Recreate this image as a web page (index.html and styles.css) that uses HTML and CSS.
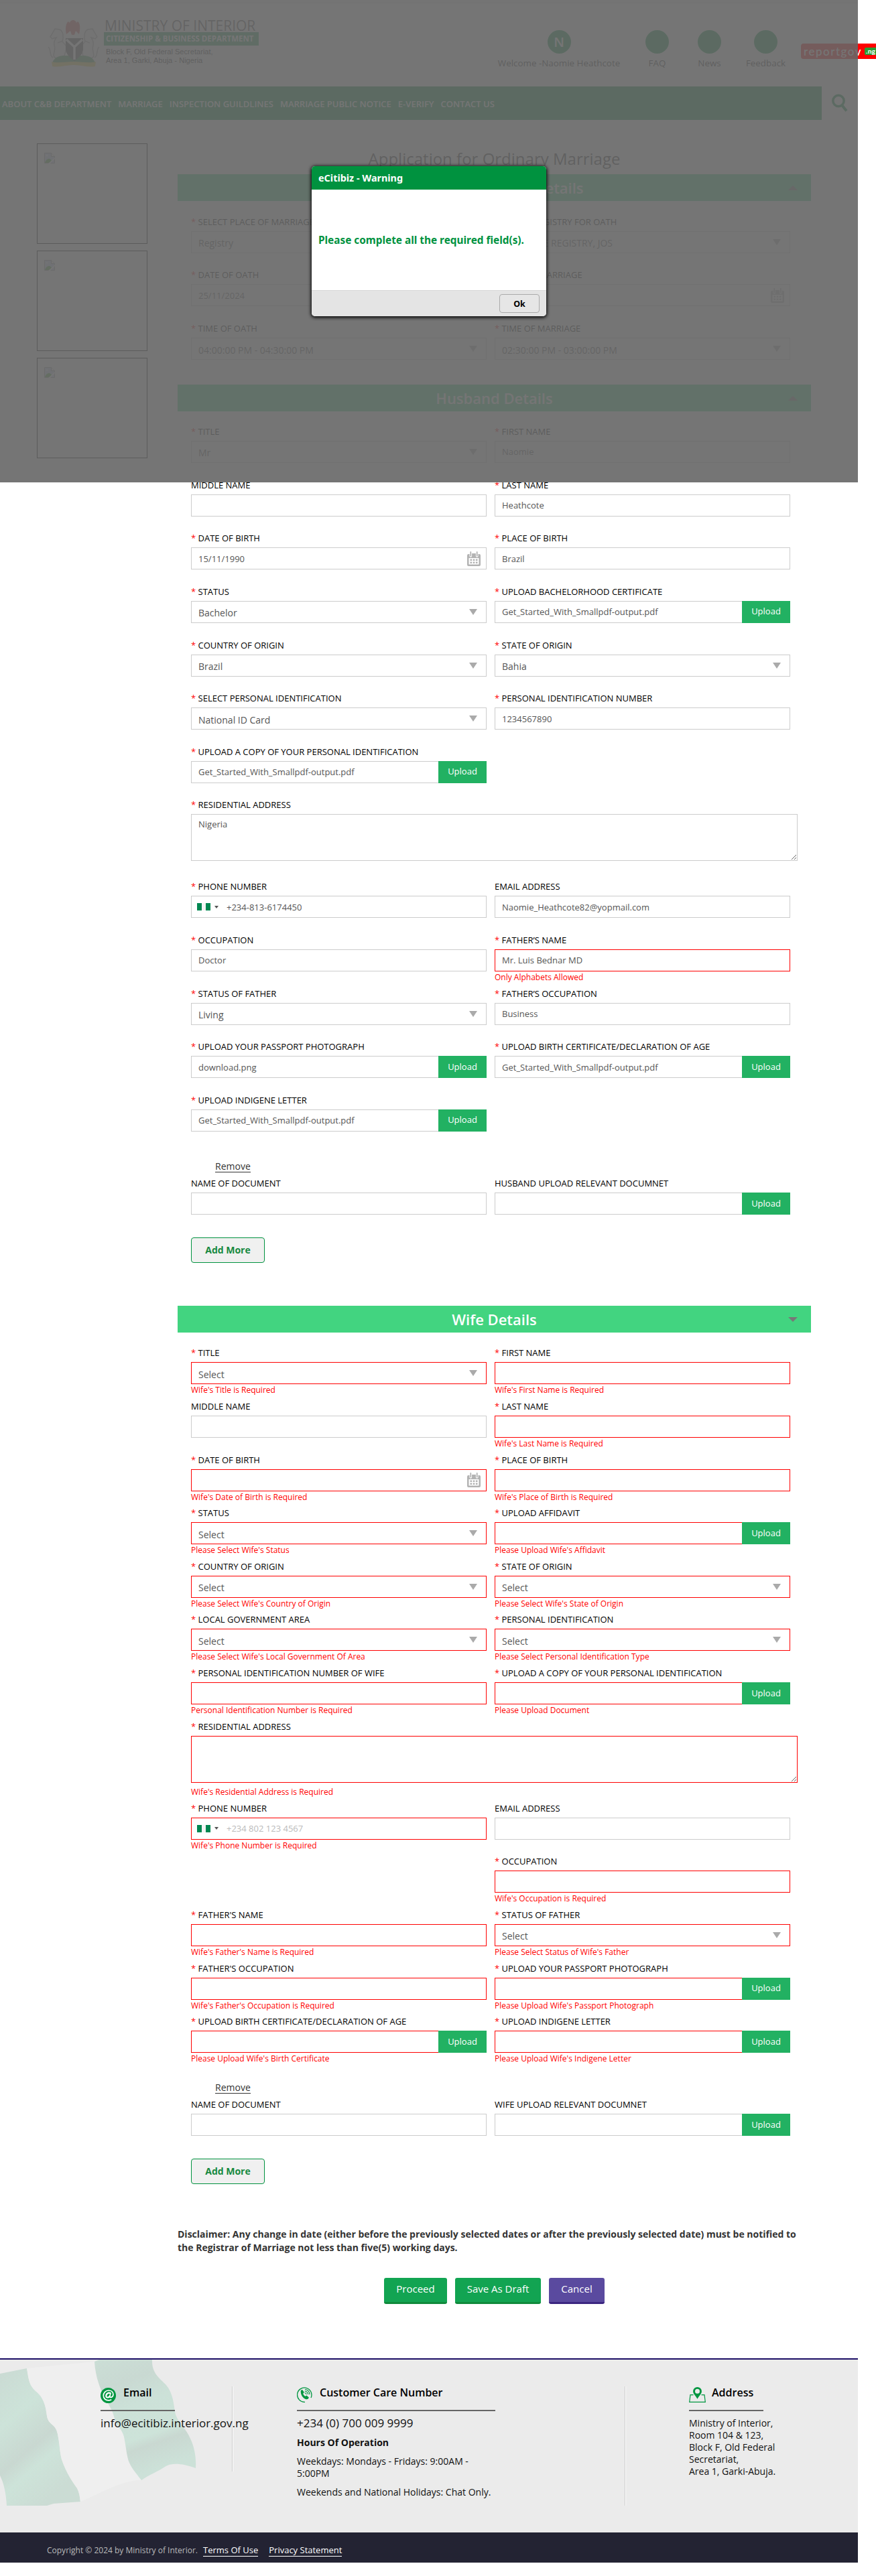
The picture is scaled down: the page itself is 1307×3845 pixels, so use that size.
FILE: index.html
```html
<!DOCTYPE html>
<html lang="en">
<head>
<meta charset="utf-8">
<title>Application for Ordinary Marriage</title>
<link rel="stylesheet" href="styles.css">
</head>
<body>
<svg width="0" height="0" class="defs" aria-hidden="true">
  <symbol id="cal" viewBox="0 0 20 22"><path fill="#b3b3b3" fill-rule="evenodd" d="M2 4h1.500v3a1.800 1.800 0 0 0 3.600 0V3h5.800v4a1.800 1.800 0 0 0 3.600 0V4H18a2 2 0 0 1 2 2v14a2 2 0 0 1-2 2H2a2 2 0 0 1-2-2V6a2 2 0 0 1 2-2zM2.500 10v9.500h15V10z"/><path stroke="#b3b3b3" stroke-width="1.800" stroke-linecap="round" d="M5.300 1v5.500M14.700 1v5.500"/><path fill="#b3b3b3" d="M4.500 11.500h2.600v2.600H4.500zM8.700 11.500h2.600v2.600H8.700zM12.900 11.500h2.600v2.600h-2.600zM4.500 15.500h2.600v2.600H4.500zM8.700 15.500h2.600v2.600H8.700zM12.900 15.500h2.600v2.600h-2.600z"/></symbol>
  <symbol id="broken" viewBox="0 0 16 16"><path fill="#c6d6f5" stroke="#999" d="M.5.500h10l5 5v10H.5z"/><path fill="#4fae3c" d="M1 15c1-4 4-6 6-6 2 0 4 2 4 3l-3 3z"/><path fill="#fff" d="M2 5c1-2 3-2 4 0zM16 7v2L9 16H6z"/><path fill="#fff" stroke="#999" d="M10.500.500v5h5"/></symbol>
</svg>
<div class="page">
  <header class="header">
    <div class="brand">
      <svg class="crest" viewBox="0 0 80 70">
        <path fill="#c8323a" d="M29 21c-2-8-1-16 3-19l2 2c1-3 3-4 5-4s4 1 5 4l2-2c4 3 4 11 2 19l-5-5-2 6h-4l-2-6z"/>
        <g fill="none" stroke="#999" stroke-width="1.500"><path fill="#f4f4f4" d="M24 60c-6-2-14-2-14-8 1-6 3-10 1-14-1-4 1-9 3-12l-6 2-3-3 7-12 7 1c6 3 6 12 4 18l7 8z"/><path fill="#f4f4f4" d="M56 60c6-2 14-2 14-8-1-6-3-10-1-14 1-4-1-9-3-12l6 2 3-3-7-12-7 1c-6 3-6 12-4 18l-7 8z"/><path d="M9 56c-6-3-2-12-7-16M71 56c6-3 2-12 7-16M24 31l-8 3M56 31l8 3"/></g>
        <path fill="#1b8a3a" d="M8 64c4-12 16-12 32-10 16-2 28-2 32 10z"/>
        <path fill="#333" d="M28 27h26v16c0 8-7 13-13 18-6-5-13-10-13-18z"/>
        <path fill="none" stroke="#fff" stroke-width="3.500" d="M29 29l12 11 12-11M41 39v20"/>
        <path fill="#dfc52a" d="M7 62c10 3 20 0 33 0s23 3 33 0l-1 7c-10 2-21-2-32-2s-22 4-32 2z"/>
      </svg>
      <div class="brand-text">
        <div class="brand-name">MINISTRY OF INTERIOR</div>
        <div class="brand-dept">CITIZENSHIP &amp; BUSINESS DEPARTMENT</div>
        <div class="brand-addr">Block F, Old Federal Secretariat,<br>Area 1, Garki, Abuja - Nigeria</div>
      </div>
    </div>
    <div class="quick">
      <div class="quick-item q-user"><span class="dot">N</span><span>Welcome -Naomie Heathcote</span></div>
      <div class="quick-item q-faq"><span class="dot"></span><span>FAQ</span></div>
      <div class="quick-item q-news"><span class="dot"></span><span>News</span></div>
      <div class="quick-item q-feed"><span class="dot"></span><span>Feedback</span></div>
    </div>
    <div class="report"><span>reportgov</span><b>.ng</b></div>
  </header>
  <div class="navrow">
    <nav class="nav"><a>ABOUT C&amp;B DEPARTMENT</a><a>MARRIAGE</a><a>INSPECTION GUILDLINES</a><a>MARRIAGE PUBLIC NOTICE</a><a>E-VERIFY</a><a>CONTACT US</a></nav>
    <svg class="search" viewBox="0 0 24 27"><g fill="none" stroke="#00923f"><circle cx="10" cy="10.500" r="8.200" stroke-width="3.500"/><path stroke-width="4" d="M15.500 17.500l6.500 8"/></g></svg>
  </div>

  <div class="main">
    <aside class="thumbs">
      <div class="thumb"><svg><use href="#broken"/></svg></div>
      <div class="thumb"><svg><use href="#broken"/></svg></div>
      <div class="thumb"><svg><use href="#broken"/></svg></div>
    </aside>
    <div class="form">
      <h1>Application for Ordinary Marriage</h1>

      <div class="bar"><h2>Marriage Registry Details</h2><i class="up"></i></div>
      <div class="fields marriage">
        <div class="row">
          <div class="f"><label><s>*</s> SELECT PLACE OF MARRIAGE</label><div class="box"><select><option>Registry</option></select><i class="tri"></i></div></div>
          <div class="f"><label><s>*</s> SELECT REGISTRY FOR OATH</label><div class="box"><select><option>MARRIAGE REGISTRY, JOS</option></select><i class="tri"></i></div></div>
        </div>
        <div class="row">
          <div class="f"><label><s>*</s> DATE OF OATH</label><div class="box"><input value="25/11/2024"><svg class="cal"><use href="#cal"/></svg></div></div>
          <div class="f"><label><s>*</s> DATE OF MARRIAGE</label><div class="box"><input><svg class="cal"><use href="#cal"/></svg></div></div>
        </div>
        <div class="row">
          <div class="f"><label><s>*</s> TIME OF OATH</label><div class="box"><select><option>04:00:00 PM - 04:30:00 PM</option></select><i class="tri"></i></div></div>
          <div class="f"><label><s>*</s> TIME OF MARRIAGE</label><div class="box"><select><option>02:30:00 PM - 03:00:00 PM</option></select><i class="tri"></i></div></div>
        </div>
      </div>

      <div class="bar"><h2>Husband Details</h2><i class="up"></i></div>
      <div class="fields husband">
        <div class="row">
          <div class="f"><label><s>*</s> TITLE</label><div class="box"><select><option>Mr</option></select><i class="tri"></i></div></div>
          <div class="f"><label><s>*</s> FIRST NAME</label><div class="box"><input value="Naomie"></div></div>
        </div>
        <div class="row">
          <div class="f"><label>MIDDLE NAME</label><div class="box"><input></div></div>
          <div class="f"><label><s>*</s> LAST NAME</label><div class="box"><input value="Heathcote"></div></div>
        </div>
        <div class="row">
          <div class="f"><label><s>*</s> DATE OF BIRTH</label><div class="box"><input value="15/11/1990"><svg class="cal"><use href="#cal"/></svg></div></div>
          <div class="f"><label><s>*</s> PLACE OF BIRTH</label><div class="box"><input value="Brazil"></div></div>
        </div>
        <div class="row">
          <div class="f"><label><s>*</s> STATUS</label><div class="box"><select><option>Bachelor</option></select><i class="tri"></i></div></div>
          <div class="f"><label><s>*</s> UPLOAD BACHELORHOOD CERTIFICATE</label><div class="box file"><input value="Get_Started_With_Smallpdf-output.pdf"><button>Upload</button></div></div>
        </div>
        <div class="row">
          <div class="f"><label><s>*</s> COUNTRY OF ORIGIN</label><div class="box"><select><option>Brazil</option></select><i class="tri"></i></div></div>
          <div class="f"><label><s>*</s> STATE OF ORIGIN</label><div class="box"><select><option>Bahia</option></select><i class="tri"></i></div></div>
        </div>
        <div class="row">
          <div class="f"><label><s>*</s> SELECT PERSONAL IDENTIFICATION</label><div class="box"><select><option>National ID Card</option></select><i class="tri"></i></div></div>
          <div class="f"><label><s>*</s> PERSONAL IDENTIFICATION NUMBER</label><div class="box"><input value="1234567890"></div></div>
        </div>
        <div class="row">
          <div class="f"><label><s>*</s> UPLOAD A COPY OF YOUR PERSONAL IDENTIFICATION</label><div class="box file"><input value="Get_Started_With_Smallpdf-output.pdf"><button>Upload</button></div></div>
        </div>
        <div class="row wide">
          <div class="f"><label><s>*</s> RESIDENTIAL ADDRESS</label><textarea>Nigeria</textarea></div>
        </div>
        <div class="row">
          <div class="f"><label><s>*</s> PHONE NUMBER</label><div class="box"><span class="flag"></span><i class="caret"></i><input class="tel" value="+234-813-6174450"></div></div>
          <div class="f"><label>EMAIL ADDRESS</label><div class="box"><input value="Naomie_Heathcote82@yopmail.com"></div></div>
        </div>
        <div class="row">
          <div class="f"><label><s>*</s> OCCUPATION</label><div class="box"><input value="Doctor"></div></div>
          <div class="f bad"><label><s>*</s> FATHER’S NAME</label><div class="box"><input value="Mr. Luis Bednar MD"></div><p>Only Alphabets Allowed</p></div>
        </div>
        <div class="row">
          <div class="f"><label><s>*</s> STATUS OF FATHER</label><div class="box"><select><option>Living</option></select><i class="tri"></i></div></div>
          <div class="f"><label><s>*</s> FATHER’S OCCUPATION</label><div class="box"><input value="Business"></div></div>
        </div>
        <div class="row">
          <div class="f"><label><s>*</s> UPLOAD YOUR PASSPORT PHOTOGRAPH</label><div class="box file"><input value="download.png"><button>Upload</button></div></div>
          <div class="f"><label><s>*</s> UPLOAD BIRTH CERTIFICATE/DECLARATION OF AGE</label><div class="box file"><input value="Get_Started_With_Smallpdf-output.pdf"><button>Upload</button></div></div>
        </div>
        <div class="row">
          <div class="f"><label><s>*</s> UPLOAD INDIGENE LETTER</label><div class="box file"><input value="Get_Started_With_Smallpdf-output.pdf"><button>Upload</button></div></div>
        </div>
        <div class="remove"><a>Remove</a></div>
        <div class="row">
          <div class="f"><label>NAME OF DOCUMENT</label><div class="box"><input></div></div>
          <div class="f"><label>HUSBAND UPLOAD RELEVANT DOCUMNET</label><div class="box file"><input><button>Upload</button></div></div>
        </div>
        <button class="add">Add More</button>
      </div>

      <div class="bar"><h2>Wife Details</h2><i class="down"></i></div>
      <div class="fields wife">
        <div class="row">
          <div class="f bad"><label><s>*</s> TITLE</label><div class="box"><select><option>Select</option></select><i class="tri"></i></div><p>Wife's Title is Required</p></div>
          <div class="f bad"><label><s>*</s> FIRST NAME</label><div class="box"><input></div><p>Wife's First Name is Required</p></div>
        </div>
        <div class="row">
          <div class="f"><label>MIDDLE NAME</label><div class="box"><input></div></div>
          <div class="f bad"><label><s>*</s> LAST NAME</label><div class="box"><input></div><p>Wife's Last Name is Required</p></div>
        </div>
        <div class="row">
          <div class="f bad"><label><s>*</s> DATE OF BIRTH</label><div class="box"><input><svg class="cal"><use href="#cal"/></svg></div><p>Wife's Date of Birth is Required</p></div>
          <div class="f bad"><label><s>*</s> PLACE OF BIRTH</label><div class="box"><input></div><p>Wife's Place of Birth is Required</p></div>
        </div>
        <div class="row">
          <div class="f bad"><label><s>*</s> STATUS</label><div class="box"><select><option>Select</option></select><i class="tri"></i></div><p>Please Select Wife's Status</p></div>
          <div class="f bad"><label><s>*</s> UPLOAD AFFIDAVIT</label><div class="box file"><input><button>Upload</button></div><p>Please Upload Wife's Affidavit</p></div>
        </div>
        <div class="row">
          <div class="f bad"><label><s>*</s> COUNTRY OF ORIGIN</label><div class="box"><select><option>Select</option></select><i class="tri"></i></div><p>Please Select Wife's Country of Origin</p></div>
          <div class="f bad"><label><s>*</s> STATE OF ORIGIN</label><div class="box"><select><option>Select</option></select><i class="tri"></i></div><p>Please Select Wife's State of Origin</p></div>
        </div>
        <div class="row">
          <div class="f bad"><label><s>*</s> LOCAL GOVERNMENT AREA</label><div class="box"><select><option>Select</option></select><i class="tri"></i></div><p>Please Select Wife's Local Government Of Area</p></div>
          <div class="f bad"><label><s>*</s> PERSONAL IDENTIFICATION</label><div class="box"><select><option>Select</option></select><i class="tri"></i></div><p>Please Select Personal Identification Type</p></div>
        </div>
        <div class="row">
          <div class="f bad"><label><s>*</s> PERSONAL IDENTIFICATION NUMBER OF WIFE</label><div class="box"><input></div><p>Personal Identification Number is Required</p></div>
          <div class="f bad"><label><s>*</s> UPLOAD A COPY OF YOUR PERSONAL IDENTIFICATION</label><div class="box file"><input><button>Upload</button></div><p>Please Upload Document</p></div>
        </div>
        <div class="row wide">
          <div class="f bad"><label><s>*</s> RESIDENTIAL ADDRESS</label><textarea></textarea><p>Wife's Residential Address is Required</p></div>
        </div>
        <div class="row">
          <div class="f bad"><label><s>*</s> PHONE NUMBER</label><div class="box"><span class="flag"></span><i class="caret"></i><input class="tel" placeholder="+234 802 123 4567"></div><p>Wife's Phone Number is Required</p></div>
          <div class="f"><label>EMAIL ADDRESS</label><div class="box"><input></div></div>
        </div>
        <div class="row">
          <div class="f"></div>
          <div class="f bad"><label><s>*</s> OCCUPATION</label><div class="box"><input></div><p>Wife's Occupation is Required</p></div>
        </div>
        <div class="row">
          <div class="f bad"><label><s>*</s> FATHER'S NAME</label><div class="box"><input></div><p>Wife's Father's Name is Required</p></div>
          <div class="f bad"><label><s>*</s> STATUS OF FATHER</label><div class="box"><select><option>Select</option></select><i class="tri"></i></div><p>Please Select Status of Wife's Father</p></div>
        </div>
        <div class="row">
          <div class="f bad"><label><s>*</s> FATHER'S OCCUPATION</label><div class="box"><input></div><p>Wife's Father's Occupation is Required</p></div>
          <div class="f bad"><label><s>*</s> UPLOAD YOUR PASSPORT PHOTOGRAPH</label><div class="box file"><input><button>Upload</button></div><p>Please Upload Wife's Passport Photograph</p></div>
        </div>
        <div class="row">
          <div class="f bad"><label><s>*</s> UPLOAD BIRTH CERTIFICATE/DECLARATION OF AGE</label><div class="box file"><input><button>Upload</button></div><p>Please Upload Wife's Birth Certificate</p></div>
          <div class="f bad"><label><s>*</s> UPLOAD INDIGENE LETTER</label><div class="box file"><input><button>Upload</button></div><p>Please Upload Wife's Indigene Letter</p></div>
        </div>
        <div class="remove"><a>Remove</a></div>
        <div class="row">
          <div class="f"><label>NAME OF DOCUMENT</label><div class="box"><input></div></div>
          <div class="f"><label>WIFE UPLOAD RELEVANT DOCUMNET</label><div class="box file"><input><button>Upload</button></div></div>
        </div>
        <button class="add">Add More</button>
      </div>

      <p class="disclaimer">Disclaimer: Any change in date (either before the previously selected dates or after the previously selected date) must be notified to<br>the Registrar of Marriage not less than five(5) working days.</p>
      <div class="actions"><button>Proceed</button><button>Save As Draft</button><button class="cancel">Cancel</button></div>
    </div>
  </div>

  <footer class="footer">
    <svg class="wave" viewBox="0 0 293 218">
      <defs>
        <linearGradient id="g1" x1="0" y1="0" x2=".5" y2="1"><stop offset="0" stop-color="#cadad3"/><stop offset=".35" stop-color="#cde3d9"/><stop offset=".62" stop-color="#c9d8d1"/><stop offset=".75" stop-color="#cde3d9"/><stop offset="1" stop-color="#cbdcd4"/></linearGradient>
        <linearGradient id="g2" x1="0" y1="0" x2=".3" y2="1"><stop offset="0" stop-color="#cbded6"/><stop offset=".25" stop-color="#c9d9d2"/><stop offset=".45" stop-color="#cce1d8"/><stop offset=".72" stop-color="#cde3d9"/><stop offset=".8" stop-color="#c9d8d1"/><stop offset="1" stop-color="#cce1d8"/></linearGradient>
      </defs>
      <path fill="url(#g1)" d="M0 21L40 13C42 25 43 32 46 38C50 46 57 49 61 55C67 65 68 70 70 84C72 98 83 95 86 111C89 125 89 137 92 149C99 170 110 185 115 192C119 200 119 206 120 212L80 215L70 218H10C9 200 6 185 0 173z"/>
      <path fill="#efefef" d="M40 13L141 3C142 22 148 42 157 58C166 74 168 76 171 88C174 100 182 103 185 115C189 135 189 148 195 158C200 167 206 173 211 180C180 180 150 200 120 212C119 206 119 200 115 192C110 185 99 170 92 149C89 137 89 125 86 111C83 95 72 98 70 84C68 70 67 65 61 55C57 49 50 46 46 38C43 32 42 25 40 13z"/>
      <path fill="url(#g2)" d="M141 3L148 0H227C226 24 243 30 251 42C260 57 259 70 262 82C267 96 278 103 284 118C290 130 293 146 292 162C270 154 255 154 246 160C236 167 222 172 211 180C206 173 200 167 195 158C189 148 189 135 185 115C182 103 174 100 171 88C168 76 166 74 157 58C148 42 142 22 141 3z"/>
    </svg>
    <section class="fcol email">
      <h3><svg width="23" height="23" viewBox="0 0 23 23"><circle cx="11.500" cy="11.500" r="11.500" fill="#009640"/><g fill="none" stroke="#fff" stroke-width="1.700"><path stroke-width="2.200" d="M14.600 8.500c-2-2.200-6.600.1-6.300 4.100.2 3 4.800 2.300 5.800-.8"/><path d="M15.200 7.300l-1.300 5.300c-.3 3.300 5 1.700 5-2.600C18.900 5.800 15.500 4 12 4 7.500 4 4.300 7.500 4.300 11.800c0 4.500 3.500 7 7.500 7 1.800 0 3.200-.4 4.500-1.100"/></g></svg>Email</h3>
      <div class="big">info@ecitibiz.interior.gov.ng</div>
    </section>
    <section class="fcol care">
      <h3><svg width="23" height="23" viewBox="0 0 23 23"><path fill="none" stroke="#009640" stroke-width="1.300" d="M12 22.300A10.700 10.700 0 1 1 21 16"/><path fill="#009640" d="M5.800 5l2.300-1 2.700 3.800-1.600 2c.6 1.800 1.600 3 3.300 4l2-1.400 3.300 3.200c-.5 2.200-2.200 3.200-4.200 2.600C9 16.600 5 11.500 5.800 5z"/><path fill="none" stroke="#009640" stroke-width="1.100" d="M12 3.500c4 .5 6.800 3.500 7 7.500M11.800 6c2.800.4 4.500 2.300 4.900 5M11.600 8.500c1.500.2 2.400 1.200 2.700 2.600"/></svg>Customer Care Number</h3>
      <div class="big">+234 (0) 700 009 9999</div>
      <b>Hours Of Operation</b>
      <p>Weekdays: Mondays - Fridays: 9:00AM -<br>5:00PM</p>
      <p>Weekends and National Holidays: Chat Only.</p>
    </section>
    <section class="fcol addr">
      <h3><svg width="25" height="23" viewBox="0 0 25 23"><path fill="#009640" fill-rule="evenodd" d="M12.500 0a6.400 6.400 0 0 1 6.400 6.400c0 3.800-4.400 7-6.400 11.300-2-4.300-6.400-7.500-6.400-11.300A6.400 6.400 0 0 1 12.500 0zm0 2.800a3.500 3.500 0 1 0 0 7 3.500 3.500 0 0 0 0-7z"/><path fill="none" stroke="#009640" stroke-width="1.200" d="M6.500 11.700H2L.7 22.300h23.600L23 11.700h-4.500"/></svg>Address</h3>
      <div>Ministry of Interior,<br>Room 104 &amp; 123,<br>Block F, Old Federal<br>Secretariat,<br>Area 1, Garki-Abuja.</div>
    </section>
  </footer>
  <div class="legal"><span>Copyright © 2024 by Ministry of Interior.</span><a>Terms Of Use</a><a>Privacy Statement</a></div>

  <div class="overlay"></div>
  <div class="modal">
    <div class="modal-head">eCitibiz - Warning</div>
    <div class="modal-body">Please complete all the required field(s).</div>
    <div class="modal-foot"><button>Ok</button></div>
  </div>
</div>
</body>
</html>
```
FILE: styles.css
```css
* { box-sizing: border-box; }
body { margin: 0; background: #fff; overflow: hidden; font-family: "Open Sans", sans-serif; font-size: 14px; color: #333; }
h1, h2, h3, p { margin: 0; }
input, select, textarea, button { font-family: inherit; margin: 0; }
.defs { position: absolute; }
.page { position: relative; width: 1280px; height: 3845px; }

.header { height: 129px; display: flex; align-items: flex-start; border-top: 4px solid #f5f5f5; box-shadow: inset 0 1px #ddd; padding-left: 70px; }
.brand { display: flex; padding-top: 26px; width: 673px; }
.crest { width: 80px; height: 70px; opacity: .8; }
.brand-text { padding-left: 5px; }
.brand-name { font-size: 21px; line-height: 18px; color: #555; white-space: nowrap; padding-left: 1px; margin-top: -1px; }
.brand-dept { width: 231px; height: 20px; margin-top: 1px; padding-left: 3px; background: #2a9e5c; color: #fff; font-size: 11.500px; font-weight: 700; line-height: 19px; white-space: nowrap; }
.brand-addr { font: 11.100px/12.500px "Liberation Sans", sans-serif; color: #222; padding: 3px 0 0 3px; }
.quick { display: flex; padding-top: 41px; font-size: 13.400px; color: #222; white-space: nowrap; }
.quick-item { display: flex; flex-direction: column; align-items: center; gap: 5px; }
.dot { width: 35px; height: 35px; border-radius: 50%; background: #00923f; color: #fff; font-size: 20px; font-weight: 600; line-height: 35px; text-align: center; }
.q-user { width: 182px; margin-right: 38px; }
.q-faq { width: 35px; margin-right: 43px; }
.q-news { width: 35px; margin-right: 37px; }
.q-feed { width: 59px; }
.report { display: flex; align-items: center; flex: none; width: 130px; height: 23px; margin: 61px -50px 0 23px; padding-left: 4px; border-radius: 4px; background: #f00; color: #fff; font: 500 17px/20px "Lato", sans-serif; }
.report span { width: 91px; letter-spacing: 1.500px; }
.report b { background: #2a9c35; border-radius: 2px; padding: 0 2px; font-size: 10px; line-height: 11px; width: 24px; letter-spacing: .3px; }

.navrow { display: flex; align-items: flex-start; height: 50px; }
.nav { width: 1226px; height: 50px; padding: 1px 0 0 3px; background: #00923f; color: #fff; display: flex; align-items: center; gap: 10px; font-size: 13px; font-weight: 600; white-space: nowrap; }
.search { width: 24px; height: 27px; margin: 11px 0 0 15px; }

.main { display: flex; height: 3341px; }
.thumbs { width: 265px; padding: 35px 0 0 55px; display: flex; flex-direction: column; gap: 10px; }
.thumb { width: 165px; height: 150px; border: 1px solid #000; padding: 13px 10px; }
.thumb svg { width: 16px; height: 16px; display: block; }

.form { width: 945px; padding-top: 41px; }
h1 { font-size: 24px; font-weight: 400; line-height: 34px; text-align: center; margin-bottom: 6px; color: #333; }
.bar { height: 40px; background: #42d480; display: grid; grid-template-columns: 1fr auto 1fr; align-items: center; }
.bar h2 { grid-column: 2; font-size: 22px; font-weight: 600; color: #fff; line-height: 40px; }
.bar i { justify-self: end; margin-right: 20px; border: 7px solid transparent; }
.bar .up { border-bottom-color: #777; border-top: 0; }
.bar .down { border-top-color: #777; border-bottom: 0; }
.fields { padding: 0 0 0 20px; }
.marriage { padding-top: 21.800px; height: 274px; }
.husband { padding-top: 20.900px; height: 1335px; }
.wife { padding-top: 21.200px; height: 1336px; }

.row { display: grid; grid-template-columns: 441px 441px; column-gap: 12px; height: 79.670px; }
.row.wide { grid-template-columns: 905px; height: 121.800px; }
.f label { display: block; height: 18px; line-height: 18px; font-size: 13px; color: #000; white-space: nowrap; margin-bottom: 5px; }
.f s { text-decoration: none; color: #f00; }
.box { display: flex; align-items: center; height: 33px; border: 1px solid #ccc; background: #fff; padding-right: 9px; }
.box input { flex: 1; min-width: 0; height: 31px; border: 0; outline: 0; background: none; padding: 0 0 0 10px; font-size: 13px; color: #555; }
.box input::placeholder { color: #bbb; }
.box .tel { padding-left: 12px; }
.box select { flex: 1; height: 31px; border: 0; background: none; appearance: none; padding: 3px 0 0 10px; font-size: 14px; color: #555; }
.tri { border: 6px solid transparent; border-top: 9px solid #aaa; border-bottom: 0; margin-right: 4px; }
.cal { width: 20px; height: 22px; margin-right: -1px; }
.flag { width: 20px; height: 11px; margin-left: 8px; background: linear-gradient(90deg, #008751 33%, #f4f4f4 33% 67%, #008751 67%); }
.caret { border: 3px solid transparent; border-top: 4px solid #555; border-bottom: 0; margin-left: 6px; }
.box.file { padding-right: 0; }
.file button { width: 72px; height: 33px; margin-right: -1px; border: 0; padding: 0 0 2px; background: #22b162; color: #fff; font-size: 13px; }
textarea { display: block; width: 905px; height: 70px; border: 1px solid #ccc; padding: 5px 10px; font-size: 13px; color: #555; }
.bad .box, .bad textarea { border-color: #f00; }
.bad p { color: #f00; font-size: 12px; line-height: 18px; }
.wide p { padding-top: 5px; }
.remove { height: 44.600px; padding: 18px 0 0 36px; font-size: 14px; line-height: 19px; }
.remove a { border-bottom: 1px solid #333; display: inline-block; line-height: 16px; }
.add { width: 110px; height: 38px; margin-top: 9.700px; border: 1px solid #00923f; border-radius: 4px; background: #f0f0f0; color: #17893f; font-size: 14px; font-weight: 700; }

.disclaimer { font-size: 14px; font-weight: 700; line-height: 20px; white-space: nowrap; }
.actions { display: flex; justify-content: center; gap: 12px; margin-top: 35px; }
.actions button { height: 39px; padding: 0 18px 5px; border: 0; border-bottom: 3px solid #118a3c; border-radius: 3px; background: #12a452; color: #fff; font-size: 15px; }
.actions .cancel { background: #5a4a9f; border-bottom-color: #3b2680; }

.footer { position: relative; height: 260px; background: #ebebeb; border-top: 2px solid #1c0f66; display: flex; padding: 40px 0 0 150px; color: #111; line-height: 18px; }
.wave { position: absolute; left: 0; top: 0; width: 293px; height: 218px; }
.fcol { position: relative; white-space: nowrap; }
.fcol h3 { display: flex; height: 37px; font-size: 16px; font-weight: 600; line-height: 18px; color: #000; border-bottom: 2px solid #666; margin-bottom: 9px; }
.fcol h3 svg { margin-right: 11px; margin-top: 1px; }
.email { width: 197px; height: 127px; border-right: 1px solid #ccc; box-shadow: 1px 0 #fff; }
.email h3 { width: 111px; }
.email h3 svg { margin-top: 2px; }
.care { margin-left: 96px; width: 490px; height: 178px; border-right: 1px solid #ccc; box-shadow: 1px 0 #fff; }
.care h3 { width: 296px; }
.care p { margin-top: 10px; }
.care b { display: block; }
.big { font-size: 17px; line-height: 18px; margin-bottom: 11px; }
.addr { margin-left: 95px; }
.addr h3 { width: 111px; }
.addr h3 svg { margin-right: 9px; }

.legal { height: 45px; background: #232333; color: #bbb; font-size: 12px; padding: 18px 0 0 70px; display: flex; align-items: baseline; }
.legal a { color: #fff; font-size: 13px; line-height: 17px; border-bottom: 1px solid #fff; margin-left: 8px; }
.legal a + a { margin-left: 16px; }

.overlay { position: absolute; left: 0; top: 0; width: 1280px; height: 720px; background: #666; opacity: .9; }
.modal { position: absolute; left: 465px; top: 248px; width: 350px; height: 224px; display: flex; flex-direction: column; border-radius: 5px; background: #fff; overflow: hidden; box-shadow: 0 1px 5px 1px #000; font-family: "Noto Sans", sans-serif; font-weight: 700; }
.modal-head { height: 35px; background: #00923f; color: #fff; font-size: 14.400px; line-height: 35px; padding-left: 10px; }
.modal-body { flex: 1; padding-left: 10px; display: flex; align-items: center; font-size: 15.350px; color: #00923f; white-space: nowrap; }
.modal-foot { height: 39px; background: #e4e4e4; border-top: 1px solid #d8d8d8; display: flex; justify-content: flex-end; padding: 5px 10px; }
.modal-foot button { width: 60px; height: 28px; border: 1px solid #aaa; border-radius: 4px; background: #e6e6e6; color: #000; font-size: 12.500px; font-weight: 700; padding: 0; }
```
